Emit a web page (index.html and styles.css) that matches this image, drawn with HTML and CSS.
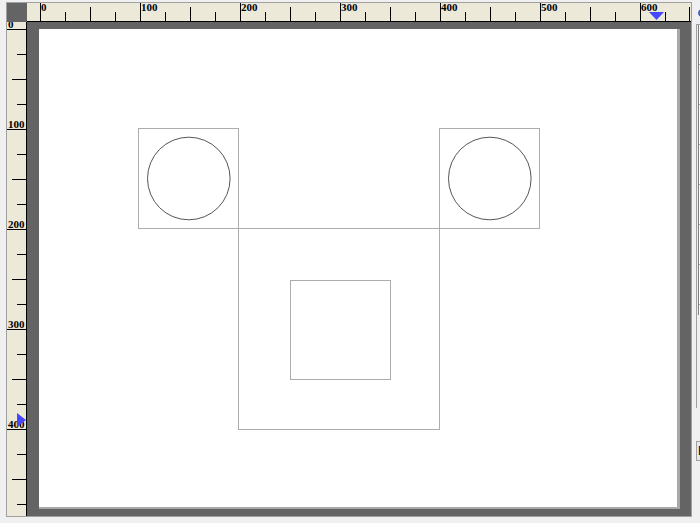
FILE: index.html
```html
<!DOCTYPE html>
<html>
<head>
<meta charset="utf-8">
<link rel="stylesheet" href="styles.css">
</head>
<body>
<div class="app">
  <div class="editor">
    <div class="corner"></div>
    <div class="hruler">
      <svg class="ruler-svg" width="663" height="18" viewBox="0 0 663 18">
        <path class="tick" d="M13.5 0V18M113.5 0V18M213.5 0V18M313.5 0V18M413.5 0V18M513.5 0V18M613.5 0V18
          M63.5 4V18M163.5 4V18M263.5 4V18M363.5 4V18M463.5 4V18M563.5 4V18M662.5 4V18
          M38.5 9V18M88.5 9V18M138.5 9V18M188.5 9V18M238.5 9V18M288.5 9V18M338.5 9V18M388.5 9V18M438.5 9V18M488.5 9V18M538.5 9V18M588.5 9V18M638.5 9V18"/>
        <text class="lbl" x="14" y="8">0</text>
        <text class="lbl" x="114" y="8">100</text>
        <text class="lbl" x="214" y="8">200</text>
        <text class="lbl" x="314" y="8">300</text>
        <text class="lbl" x="414" y="8">400</text>
        <text class="lbl" x="514" y="8">500</text>
        <text class="lbl" x="614" y="8">600</text>
        <polygon class="marker" points="622,9 637,9 629.5,17"/>
      </svg>
    </div>
    <div class="vruler">
      <svg class="ruler-svg" width="19" height="494" viewBox="0 0 19 494">
        <path class="tick" d="M0 7.5H19M0 107.5H19M0 207.5H19M0 307.5H19M0 407.5H19
          M5 57.5H19M5 157.5H19M5 257.5H19M5 357.5H19M5 457.5H19
          M10 32.5H19M10 82.5H19M10 132.5H19M10 182.5H19M10 232.5H19M10 282.5H19M10 332.5H19M10 382.5H19M10 432.5H19M10 482.5H19"/>
        <text class="lbl" x="1" y="6">0</text>
        <text class="lbl" x="1" y="106">100</text>
        <text class="lbl" x="1" y="206">200</text>
        <text class="lbl" x="1" y="306">300</text>
        <text class="lbl" x="1" y="406">400</text>
        <polygon class="marker" points="10,391 10,405 19,398"/>
      </svg>
    </div>
    <div class="workspace">
      <div class="page">
        <svg class="drawing" width="638" height="478" viewBox="0 0 638 478">
          <rect class="shape" x="99.5" y="99.5" width="100" height="100"/>
          <rect class="shape" x="400.5" y="99.5" width="100" height="100"/>
          <rect class="shape" x="199.5" y="199.5" width="201" height="201"/>
          <rect class="shape" x="251.5" y="251.5" width="100" height="99"/>
          <circle class="round" cx="149.8" cy="149.5" r="41.3"/>
          <circle class="round" cx="450.8" cy="149.5" r="41.3"/>
        </svg>
      </div>
    </div>
  </div>
  <div class="side">
    <div class="side-icon"></div>
    <div class="side-panel">
      <div class="side-list">
        <div class="side-row"></div>
        <div class="side-row"></div>
        <div class="side-row"></div>
        <div class="side-row"></div>
        <div class="side-row"></div>
        <div class="side-row"></div>
        <div class="side-row"></div>
      </div>
    </div>
    <div class="side-btn">E</div>
  </div>
</div>
</body>
</html>
```

FILE: styles.css
```css
html, body {
  margin: 0;
  padding: 0;
}
body {
  width: 700px;
  height: 523px;
  overflow: hidden;
  background: #f0f0f0;
  font-family: "Liberation Serif", serif;
}
.app {
  display: flex;
  padding: 2px 0 0 6px;
  height: 523px;
  box-sizing: border-box;
}
.editor {
  flex: none;
  width: 686px;
  height: 515px;
  box-sizing: border-box;
  border: 1px solid #a0a0a0;
  background: #646464;
  display: grid;
  grid-template-columns: 20px 1fr;
  grid-template-rows: 19px 1fr;
}
.corner {
  background: #646464;
}
.hruler {
  background: #ece9d8;
  border-bottom: 1px solid #000;
  overflow: hidden;
  line-height: 0;
}
.vruler {
  background: #ece9d8;
  border-right: 1px solid #000;
  overflow: hidden;
  line-height: 0;
}
.ruler-svg {
  display: block;
  overflow: hidden;
}
.tick {
  stroke: #000;
  stroke-width: 1;
  fill: none;
  shape-rendering: crispEdges;
}
.lbl {
  font-family: "Liberation Serif", serif;
  font-weight: bold;
  font-size: 11px;
  fill: #000;
}
.marker {
  fill: #4646ff;
}
.workspace {
  background: #646464;
  padding: 7px 0 0 12px;
  overflow: hidden;
}
.page {
  width: 638px;
  height: 478px;
  background: #fff;
  border-right: 3px solid #a8a8a8;
  border-bottom: 2px solid #a8a8a8;
  line-height: 0;
}
.drawing {
  display: block;
}
.shape {
  fill: none;
  stroke: #acacac;
  stroke-width: 1;
  shape-rendering: crispEdges;
}
.round {
  fill: none;
  stroke: #2a2a2a;
  stroke-width: 0.8;
}
.side {
  flex: 1;
  display: flex;
  flex-direction: column;
  padding-left: 4px;
  overflow: hidden;
}
.side-icon {
  width: 6px;
  height: 6px;
  margin: 7px 0 0 2px;
  border-radius: 50%;
  border: 1px solid #2a4fb8;
  background: radial-gradient(circle, #f0a040 30%, #3a60d0 70%);
}
.side-panel {
  margin-top: 7px;
  height: 383px;
  border-left: 1px solid #a0a0a0;
  border-top: 1px solid #a0a0a0;
  background: #f0f0f0;
}
.side-list {
  margin-left: 1px;
  height: 290px;
  border-left: 1px solid #808080;
  background: #fff;
}
.side-row {
  height: 39px;
  border-bottom: 1px solid #a0a0a0;
}
.side-btn {
  margin-top: 33px;
  height: 18px;
  border: 1px solid #a0a0a0;
  border-right: none;
  background: #e8e8e8;
  font-family: "Liberation Sans", sans-serif;
  font-size: 12px;
  line-height: 18px;
  padding-left: 1px;
  color: #000;
}
```
